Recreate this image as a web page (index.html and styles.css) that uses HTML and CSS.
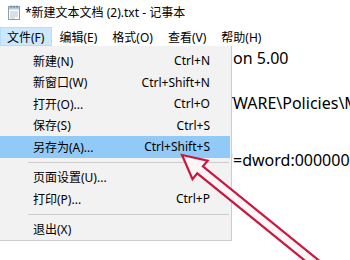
FILE: index.html
```html
<!DOCTYPE html>
<html lang="zh-CN">
<head>
  <meta charset="UTF-8" />
  <title>*新建文本文档 (2).txt - 记事本</title>
  <link rel="stylesheet" href="styles.css">
</head>
<body>

<div class="window">
  <div class="titlebar">
    <svg class="app-icon" width="12" height="15" viewBox="0 0 12 15">
      <rect x="0.5" y="1.5" width="11" height="13" fill="#fbfcfd" stroke="#8c9fb0"/>
      <rect x="1" y="2" width="10" height="2.5" fill="#a9cdea"/>
      <path d="M2 7h8M2 9h8M2 11h8M2 13h5" stroke="#b9c2ca"/>
      <path d="M3 0.5v2.5M6 0.5v2.5M9 0.5v2.5" stroke="#6f7d8a"/>
    </svg>
    <span class="title">*新建文本文档 (2).txt - 记事本</span>
  </div>

  <div class="menubar">
    <span class="menu-item active">文件(F)</span>
    <span class="menu-item">编辑(E)</span>
    <span class="menu-item">格式(O)</span>
    <span class="menu-item">查看(V)</span>
    <span class="menu-item">帮助(H)</span>
  </div>

  <div class="editor">
    <div class="line"><span class="under"><span>Windows Registry Editor Versi</span></span>on 5.00</div>
    <div class="line second"><span class="under"><span>[HKEY_LOCAL_MACHINE\SOFT</span></span>WARE\Policies\Microsoft\Windows Defender]</div>
    <div class="line third"><span class="under"><span>"DisableAntiSpyware"</span></span>=dword:00000001</div>
  </div>

  <!-- File menu dropdown -->
  <div class="dropdown">
    <div class="row"><span>新建(N)</span><span>Ctrl+N</span></div>
    <div class="row"><span>新窗口(W)</span><span>Ctrl+Shift+N</span></div>
    <div class="row"><span>打开(O)...</span><span>Ctrl+O</span></div>
    <div class="row"><span>保存(S)</span><span>Ctrl+S</span></div>
    <div class="row hover"><span>另存为(A)...</span><span>Ctrl+Shift+S</span></div>
    <div class="sep"></div>
    <div class="row"><span>页面设置(U)...</span><span></span></div>
    <div class="row"><span>打印(P)...</span><span>Ctrl+P</span></div>
    <div class="sep"></div>
    <div class="row"><span>退出(X)</span><span></span></div>
  </div>

  <!-- red pointer arrow -->
  <svg class="arrow" width="350" height="260" viewBox="0 0 350 260">
    <polygon points="182,155 207.7,160.6 202.9,166.4 341.2,278.5 335.6,285.5 197.3,173.4 192.5,179.2"
             fill="#fdf6f7" stroke="#c9173f" stroke-width="2.2" stroke-linejoin="miter"/>
  </svg>
</div>

</body>
</html>
```

FILE: styles.css
```css
body {
  margin: 0;
  background: #fff;
  font-family: "Noto Sans", "Noto Sans CJK SC", sans-serif;
  color: #000;
}

.window {
  position: relative;
  width: 350px;
  height: 260px;
  overflow: hidden;
  background: #fff;
}

.titlebar {
  display: flex;
  align-items: center;
  height: 27px;
  padding-left: 8px;
  gap: 5px;
}

.app-icon {
  margin-top: -2px;
}

.title {
  font-size: 12px;
  margin-top: -3px;
}

.menubar {
  display: flex;
  height: 19px;
  font-size: 12px;
}

.menu-item {
  display: flex;
  align-items: center;
  padding: 0 7px 0 6px;
  border: 1px solid transparent;
}

.menu-item.active {
  background: #cce8ff;
  border-color: #b3dcfd;
}

.editor {
  padding-top: 1px;
  font-size: 16px;
  white-space: nowrap;
}

.line {
  height: 22px;
  line-height: 22px;
}

.line.second {
  margin-top: 23px;
}

.line.third {
  margin-top: 35px;
}

/* text hidden under the open menu */
.under {
  display: inline-flex;
  justify-content: flex-end;
  width: 233px;
  overflow: hidden;
  vertical-align: top;
}

.under span {
  flex-shrink: 0;
}

.dropdown {
  position: absolute;
  top: 46px;
  left: 0;
  width: 231px;
  padding: 4px 0 0;
  background: #f2f2f2;
  border-right: 1px solid #cccccc;
  border-bottom: 1px solid #cccccc;
  font-size: 12px;
}

.row {
  display: flex;
  justify-content: space-between;
  align-items: center;
  height: 21.5px;
  padding: 0 20px 0 33px;
  margin-right: 1px;
}

.row.hover {
  background: #91c9f7;
}

.sep {
  height: 1px;
  margin: 4px 2px 4px 28px;
  background: #cccccc;
}

.arrow {
  position: absolute;
  top: 0;
  left: 0;
  pointer-events: none;
}
```
